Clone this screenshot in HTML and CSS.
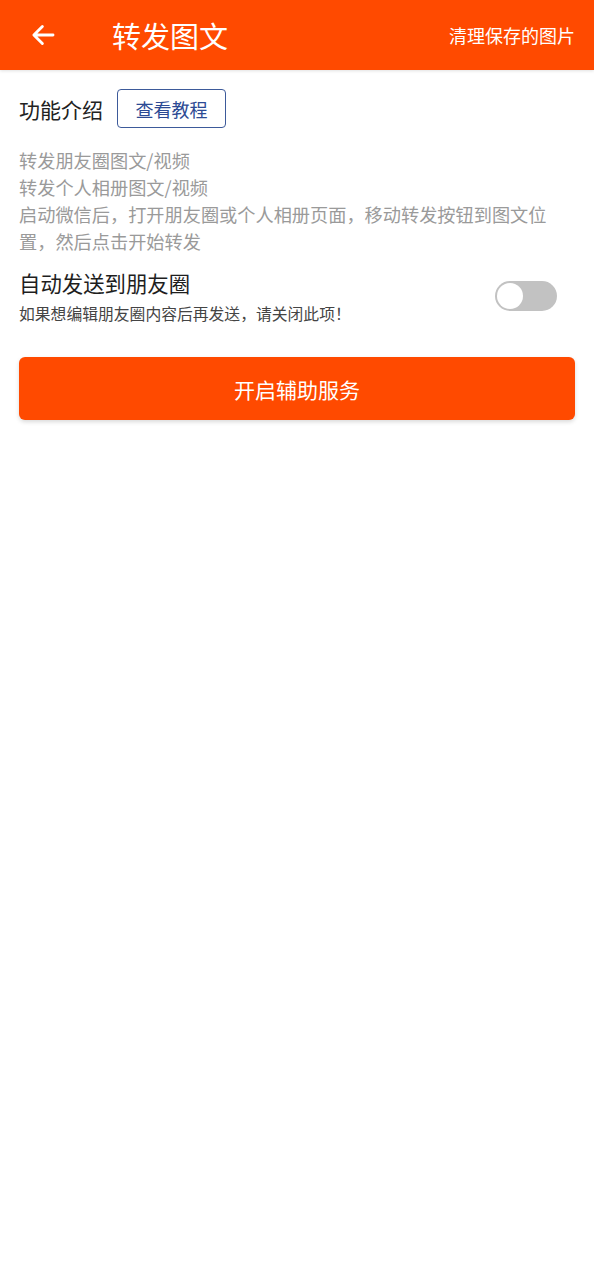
FILE: index.html
```html
<!DOCTYPE html>
<html lang="zh">
<head>
<meta charset="utf-8">
<link rel="stylesheet" href="styles.css">
</head>
<body>
<header class="appbar">
  <div class="back">
    <svg width="30" height="30" viewBox="0 0 24 24"><path d="M20 12H5M11.5 5.2 4.7 12l6.8 6.8" fill="none" stroke="#fff" stroke-width="2.3" stroke-linecap="round" stroke-linejoin="round"/></svg>
  </div>
  <div class="title">转发图文</div>
  <div class="action">清理保存的图片</div>
</header>
<main class="content">
  <div class="intro-row">
    <span class="intro-label">功能介绍</span>
    <span class="tutorial-btn">查看教程</span>
  </div>
  <div class="desc">
    <p>转发朋友圈图文/视频</p>
    <p>转发个人相册图文/视频</p>
    <p>启动微信后，打开朋友圈或个人相册页面，移动转发按钮到图文位置，然后点击开始转发</p>
  </div>
  <div class="setting">
    <div class="setting-text">
      <div class="setting-title">自动发送到朋友圈</div>
      <div class="setting-sub">如果想编辑朋友圈内容后再发送，请关闭此项！</div>
    </div>
    <div class="switch"><span class="knob"></span></div>
  </div>
  <div class="primary-btn">开启辅助服务</div>
</main>
</body>
</html>
```
FILE: styles.css
```css
* { box-sizing: border-box; }
html, body { margin: 0; padding: 0; background: #fff; }
body {
  font-family: "Noto Sans CJK SC", "Noto Sans", sans-serif;
  width: 594px;
  min-height: 1280px;
}
.appbar {
  height: 70px;
  background: #ff4a00;
  display: flex;
  align-items: center;
  color: #fff;
  box-shadow: 0 1px 3px rgba(0,0,0,0.12);
}
.back {
  width: 112px;
  padding-left: 28px;
  display: flex;
  align-items: center;
}
.title {
  font-size: 29px;
  flex: 1;
  line-height: 1;
}
.action {
  font-size: 18px;
  padding-right: 19px;
  line-height: 1;
}
.content {
  padding: 19px 19px 0 19px;
}
.intro-row {
  display: flex;
  align-items: center;
  gap: 14px;
}
.intro-label {
  font-size: 21px;
  color: #222;
}
.tutorial-btn {
  width: 109px;
  height: 39px;
  border: 1px solid #3d5a9a;
  border-radius: 4px;
  color: #2c4a94;
  font-size: 18px;
  display: flex;
  align-items: center;
  justify-content: center;
}
.desc {
  margin-top: 19px;
  color: #9a9a9a;
  font-size: 18.2px;
  line-height: 27px;
}
.desc p { margin: 0; }
.setting {
  margin-top: 13px;
  display: flex;
  align-items: flex-start;
  justify-content: space-between;
}
.setting-title {
  font-size: 21.4px;
  color: #1e1e1e;
  line-height: 30px;
}
.setting-sub {
  font-size: 15.8px;
  color: #444;
  line-height: 22px;
  margin-top: 5px;
}
.switch {
  width: 62px;
  height: 30px;
  border-radius: 15px;
  background: #c2c2c2;
  margin-right: 18px;
  margin-top: 13px;
  position: relative;
}
.knob {
  position: absolute;
  left: 2px;
  top: 2px;
  width: 26px;
  height: 26px;
  border-radius: 50%;
  background: #fff;
}
.primary-btn {
  margin-top: 32px;
  height: 63px;
  border-radius: 6px;
  background: #ff4a00;
  color: #fff;
  font-size: 21px;
  display: flex;
  align-items: center;
  justify-content: center;
  box-shadow: 0 2px 4px rgba(0,0,0,0.15);
}
```
